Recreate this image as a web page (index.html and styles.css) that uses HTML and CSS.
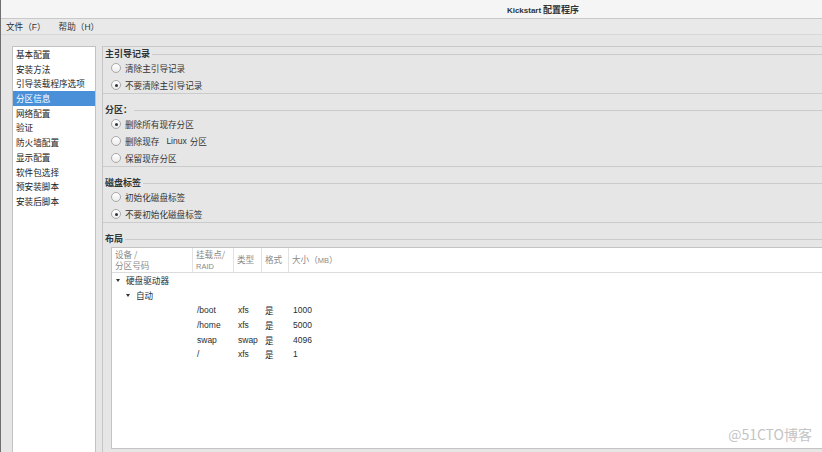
FILE: index.html
```html
<!DOCTYPE html>
<html lang="zh-CN">
<head>
<meta charset="utf-8">
<title>Kickstart 配置程序</title>
<link rel="stylesheet" href="styles.css">
</head>
<body>
<div class="window">
  <div class="titlebar"><span class="t-latin">Kickstart</span> <span class="t-cjk">配置程序</span></div>
  <div class="menubar">
    <span class="menu">文件（<span class="latin">F</span>）</span>
    <span class="menu">帮助（<span class="latin">H</span>）</span>
  </div>
  <div class="main">
    <ul class="sidebar">
      <li>基本配置</li>
      <li>安装方法</li>
      <li>引导装载程序选项</li>
      <li class="selected">分区信息</li>
      <li>网络配置</li>
      <li>验证</li>
      <li>防火墙配置</li>
      <li>显示配置</li>
      <li>软件包选择</li>
      <li>预安装脚本</li>
      <li>安装后脚本</li>
    </ul>
    <div class="pane">
      <section class="frame">
        <div class="frame-head"><span class="frame-label">主引导记录</span><span class="frame-line"></span></div>
        <div class="opt"><span class="radio"></span>清除主引导记录</div>
        <div class="opt"><span class="radio checked"></span>不要清除主引导记录</div>
      </section>
      <section class="frame">
        <div class="frame-head"><span class="frame-label">分区：</span><span class="frame-line"></span></div>
        <div class="opt"><span class="radio checked"></span>删除所有现存分区</div>
        <div class="opt"><span class="radio"></span>删除现存<span class="latin gap">Linux</span>分区</div>
        <div class="opt"><span class="radio"></span>保留现存分区</div>
      </section>
      <section class="frame">
        <div class="frame-head"><span class="frame-label">磁盘标签</span><span class="frame-line"></span></div>
        <div class="opt"><span class="radio"></span>初始化磁盘标签</div>
        <div class="opt"><span class="radio checked"></span>不要初始化磁盘标签</div>
      </section>
      <section class="frame layout">
        <div class="frame-head"><span class="frame-label">布局</span><span class="frame-line"></span></div>
        <div class="table">
          <div class="thead">
            <div class="th">设备 /<br>分区号码</div>
            <div class="th">挂载点/<br><span class="latin">RAID</span></div>
            <div class="th single">类型</div>
            <div class="th single">格式</div>
            <div class="th single last">大小（<span class="latin">MB</span>）</div>
          </div>
          <div class="tbody">
            <div class="tree l1"><span class="tri"></span>硬盘驱动器</div>
            <div class="tree l2"><span class="tri"></span>自动</div>
            <div class="row"><span></span><span>/boot</span><span>xfs</span><span class="cjk">是</span><span>1000</span></div>
            <div class="row"><span></span><span>/home</span><span>xfs</span><span class="cjk">是</span><span>5000</span></div>
            <div class="row"><span></span><span>swap</span><span>swap</span><span class="cjk">是</span><span>4096</span></div>
            <div class="row"><span></span><span>/</span><span>xfs</span><span class="cjk">是</span><span>1</span></div>
          </div>
        </div>
      </section>
    </div>
  </div>
  <div class="watermark">@51CTO博客</div>
</div>
</body>
</html>
```
FILE: styles.css
```css
* { box-sizing: border-box; }
html, body {
  margin: 0;
  padding: 0;
  width: 822px;
  height: 452px;
  overflow: hidden;
  background: #e6e6e6;
  font-family: "Noto Sans CJK SC", "Noto Sans", sans-serif;
  font-size: 8.6px;
  color: #2a2e30;
}
.window {
  position: relative;
  width: 822px;
  height: 452px;
  border-left: 1px solid #6f6f6f;
  display: flex;
  flex-direction: column;
}
.titlebar {
  height: 19px;
  background: #f5f5f5;
  border-bottom: 1px solid #c9c9c9;
  text-align: center;
  padding-left: 263px;
  line-height: 18px;
  font-weight: bold;
  color: #2e3436;
  flex: none;
}
.t-latin { font-family: "Liberation Sans", sans-serif; font-size: 8px; font-weight: bold; }
.t-cjk { font-size: 9px; }
.menubar {
  height: 16px;
  background: #e9e9e9;
  border-bottom: 1px solid #d8d8d8;
  line-height: 15px;
  padding-left: 5px;
  display: flex;
  gap: 13px;
  flex: none;
  color: #2e3436;
}
.main {
  flex: 1;
  display: flex;
  padding-left: 11px;
  min-height: 0;
}
.sidebar {
  list-style: none;
  margin: 11px 6px 0 0;
  padding: 0;
  width: 84px;
  background: #fff;
  border: 1px solid #c2c2c2;
  border-bottom: none;
  flex: none;
}
.sidebar li {
  height: 14.7px;
  line-height: 14.7px;
  padding-left: 3px;
  color: #222;
  white-space: nowrap;
}
.sidebar li.selected {
  background: #4a90d9;
  color: #fff;
}
.pane {
  flex: 1;
  margin-top: 11px;
  border-top: 1px solid #cacaca;
  border-left: 1px solid #c4c4c4;
  display: flex;
  flex-direction: column;
  min-width: 0;
}
.frame {
  border-bottom: 1px solid #cbcbcb;
  margin-bottom: 9px;
}
.frame-head {
  height: 13px;
  display: flex;
  align-items: center;
}
.frame-label {
  padding-left: 2px;
  padding-right: 2px;
  font-weight: bold;
  font-size: 9px;
  color: #2e3436;
  line-height: 13px;
  white-space: nowrap;
}
.frame-line {
  flex: 1;
  border-top: 1px solid #cbcbcb;
  margin-top: 1px;
}
.opt {
  height: 16px;
  margin-bottom: 1px;
  display: flex;
  align-items: center;
  padding-left: 8px;
  color: #333;
  white-space: nowrap;
}
.opt:last-child { margin-bottom: 0; }
.latin { font-family: "Liberation Sans", sans-serif; font-size: 8.5px; }
.latin.gap { margin: 0 3px 0 7px; }
.radio {
  width: 10px;
  height: 10px;
  border-radius: 50%;
  border: 1px solid #a9a9a9;
  background: linear-gradient(#ffffff, #ececec);
  margin-right: 4px;
  position: relative;
  flex: none;
}
.radio.checked::after {
  content: "";
  position: absolute;
  left: 2.5px;
  top: 2.5px;
  width: 3px;
  height: 3px;
  border-radius: 50%;
  background: #2e3436;
}
.layout {
  flex: 1;
  border-bottom: none;
  margin-bottom: 3px;
  display: flex;
  flex-direction: column;
}
.table {
  flex: 1;
  margin: 2px 0 0 8px;
  background: #fff;
  border: 1px solid #c3c3c3;
  border-right: none;
}
.thead {
  display: grid;
  grid-template-columns: 81px 41px 28px 27px 1fr;
  height: 25px;
  border-bottom: 1px solid #dcdcdc;
}
.th {
  border-right: 1px solid #e2e2e2;
  color: #8a8a8a;
  font-size: 8.6px;
  line-height: 11px;
  padding: 1px 0 0 3px;
  white-space: nowrap;
}
.th .latin { font-size: 7.5px; }
.th.single { line-height: 22px; padding-top: 0; }
.th.last { border-right: none; }
.tree, .row {
  height: 14.7px;
  line-height: 14.7px;
  white-space: nowrap;
  color: #2a2e30;
}
.tree { display: flex; align-items: center; }
.tree.l1 { padding-left: 4px; }
.tree.l2 { padding-left: 14px; }
.tri {
  width: 0;
  height: 0;
  border-left: 2.5px solid transparent;
  border-right: 2.5px solid transparent;
  border-top: 3.5px solid #2e3436;
  margin-right: 6px;
}
.row {
  display: grid;
  grid-template-columns: 81px 41px 28px 27px 1fr;
  font-family: "Liberation Sans", sans-serif;
  font-size: 8.5px;
  padding-top: 1px;
}
.row span { padding-left: 4px; }
.row span.cjk { font-family: "Noto Sans CJK SC", sans-serif; font-size: 8.6px; padding-left: 3px; }
.watermark {
  position: absolute;
  right: 10px;
  top: 425px;
  font-family: "Noto Sans CJK SC", "Noto Sans", sans-serif;
  font-size: 14px;
  color: #c4c4c4;
  line-height: 18px;
}
```
